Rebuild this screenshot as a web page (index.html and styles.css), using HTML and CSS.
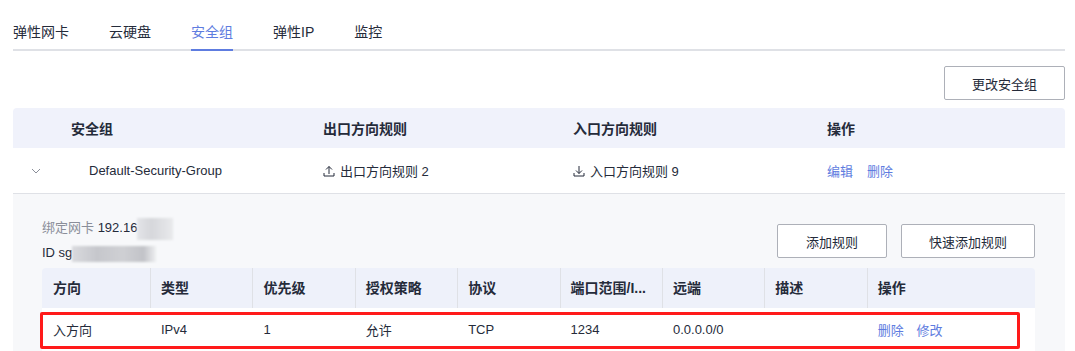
FILE: index.html
```html
<!DOCTYPE html>
<html lang="zh-CN">
<head>
    <meta charset="UTF-8">
    <title>安全组</title>
    <link rel="stylesheet" href="styles.css">
</head>
<body>
    <div class="page">
        <div class="tabs">
            <div class="tab">弹性网卡</div>
            <div class="tab">云硬盘</div>
            <div class="tab active">安全组</div>
            <div class="tab">弹性IP</div>
            <div class="tab">监控</div>
        </div>

        <div class="top-bar">
            <button class="btn">更改安全组</button>
        </div>

        <div class="sg-table">
            <div class="sg-head">
                <div></div>
                <div class="cell">安全组</div>
                <div class="cell">出口方向规则</div>
                <div class="cell">入口方向规则</div>
                <div class="cell">操作</div>
            </div>
            <div class="sg-row">
                <div class="chevron">
                    <svg width="10" height="6" viewBox="0 0 10 6"><path d="M1 1l4 4 4-4" fill="none" stroke="#8a8e99" stroke-width="1"/></svg>
                </div>
                <div class="cell name">Default-Security-Group</div>
                <div class="cell">
                    <svg class="dir-icon" width="12" height="12" viewBox="0 0 12 12"><path d="M6 9V1.5M3 4.5L6 1.5l3 3M1 8v3h10V8" fill="none" stroke="#252b3a" stroke-width="1"/></svg>
                    出口方向规则 2
                </div>
                <div class="cell">
                    <svg class="dir-icon" width="12" height="12" viewBox="0 0 12 12"><path d="M6 1v7.5M3 5.5l3 3 3-3M1 8v3h10V8" fill="none" stroke="#252b3a" stroke-width="1"/></svg>
                    入口方向规则 9
                </div>
                <div class="cell actions">
                    <a>编辑</a>
                    <a>删除</a>
                </div>
            </div>

            <div class="detail">
                <div class="detail-bar">
                    <div class="info">
                        <div><span class="label">绑定网卡</span> 192.16<span class="masked m1"></span></div>
                        <div>ID sg<span class="masked m2"></span></div>
                    </div>
                    <div class="detail-btns">
                        <button class="btn wide">添加规则</button>
                        <button class="btn wide">快速添加规则</button>
                    </div>
                </div>

                <div class="rule-table">
                    <div class="rule-head">
                        <div class="rcell">方向</div>
                        <div class="rcell">类型</div>
                        <div class="rcell">优先级</div>
                        <div class="rcell">授权策略</div>
                        <div class="rcell">协议</div>
                        <div class="rcell" title="端口范围/ICMP类型">端口范围/I...</div>
                        <div class="rcell">远端</div>
                        <div class="rcell">描述</div>
                        <div class="rcell">操作</div>
                    </div>
                    <div class="rule-row">
                        <div class="rcell">入方向</div>
                        <div class="rcell">IPv4</div>
                        <div class="rcell">1</div>
                        <div class="rcell">允许</div>
                        <div class="rcell">TCP</div>
                        <div class="rcell">1234</div>
                        <div class="rcell">0.0.0.0/0</div>
                        <div class="rcell"></div>
                        <div class="rcell actions">
                            <a>删除</a>
                            <a>修改</a>
                        </div>
                        <div class="highlight"></div>
                    </div>
                </div>
            </div>
        </div>
    </div>
</body>
</html>
```

FILE: styles.css
```css
body {
    margin: 0;
    font-family: "Liberation Sans", "Noto Sans CJK SC", sans-serif;
    font-size: 13px;
    color: #252b3a;
    background-color: #fff;
}
.page {
    width: 1052px;
    margin-left: 13px;
}
.tabs {
    display: flex;
    gap: 40px;
    padding-top: 22px;
    border-bottom: 2px solid #dfe1e6;
}
.tab {
    font-size: 14px;
    line-height: 20px;
    padding-bottom: 7px;
    margin-bottom: -2px;
    border-bottom: 2px solid transparent;
}
.tab.active {
    color: #5e7ce0;
    border-bottom-color: #5e7ce0;
}
.top-bar {
    display: flex;
    justify-content: flex-end;
    margin-top: 15px;
    margin-bottom: 8px;
}
.btn {
    font-family: inherit;
    font-size: 13px;
    color: #252b3a;
    background-color: #fff;
    border: 1px solid #adb0b8;
    border-radius: 2px;
    height: 34px;
    width: 121px;
    padding: 0;
}
.btn.wide {
    width: 110px;
}
.detail-btns .btn:last-child {
    width: 134px;
}
.sg-head, .sg-row {
    display: grid;
    grid-template-columns: 46px 252px 250px 254px 1fr;
    align-items: center;
}
.sg-head {
    height: 40px;
    background-color: #f0f2fb;
    border-radius: 4px 4px 0 0;
    font-weight: bold;
    font-size: 14px;
}
.sg-row {
    height: 45px;
    border-bottom: 1px solid #dfe1e6;
}
.cell {
    padding-left: 12px;
    display: flex;
    align-items: center;
}
.cell.name {
    padding-left: 30px;
}
.chevron {
    padding-left: 18px;
    display: flex;
    align-items: center;
}
.dir-icon {
    margin-right: 5px;
}
.actions a {
    color: #5e7ce0;
    margin-right: 14px;
    cursor: pointer;
}
.rule-row .actions a {
    margin-right: 9px;
}
.detail {
    background-color: #f7f8fa;
    padding: 21px 30px 0 29px;
}
.detail-bar {
    display: flex;
    justify-content: space-between;
    margin-bottom: 3px;
}
.info {
    line-height: 25px;
}
.label {
    color: #8a8e99;
}
.masked {
    display: inline-block;
    vertical-align: middle;
    background: linear-gradient(90deg, #e4e5e8, #d6d7db 40%, #e9eaec);
    filter: blur(1px);
}
.m1 {
    width: 36px;
    height: 22px;
}
.m2 {
    width: 84px;
    height: 16px;
    background: linear-gradient(90deg, #d9dade, #c6c7cc 30%, #cfd0d4 60%, #c2c3c8 85%, #eeeff1);
}
.detail-btns {
    display: flex;
    gap: 14px;
    margin-top: 9px;
}
.rule-head, .rule-row {
    display: grid;
    grid-template-columns: 109px repeat(7, 102.4px) 1fr;
    align-items: center;
}
.rule-head {
    height: 40px;
    background-color: #eef1fa;
    border-radius: 4px 4px 0 0;
    font-weight: bold;
    font-size: 14px;
}
.rule-head .rcell {
    height: 40px;
    line-height: 40px;
    border-right: 1px solid #dfe1e6;
}
.rule-head .rcell:last-child {
    border-right: none;
}
.rule-row {
    position: relative;
    height: 43px;
    background-color: #fff;
}
.rcell {
    padding-left: 10px;
    white-space: nowrap;
}
.rcell:first-child {
    padding-left: 11px;
}
.highlight {
    position: absolute;
    left: -2px;
    top: 4px;
    width: 974px;
    height: 31px;
    border: 3px solid #ff1a1a;
    border-radius: 2px;
}
```
